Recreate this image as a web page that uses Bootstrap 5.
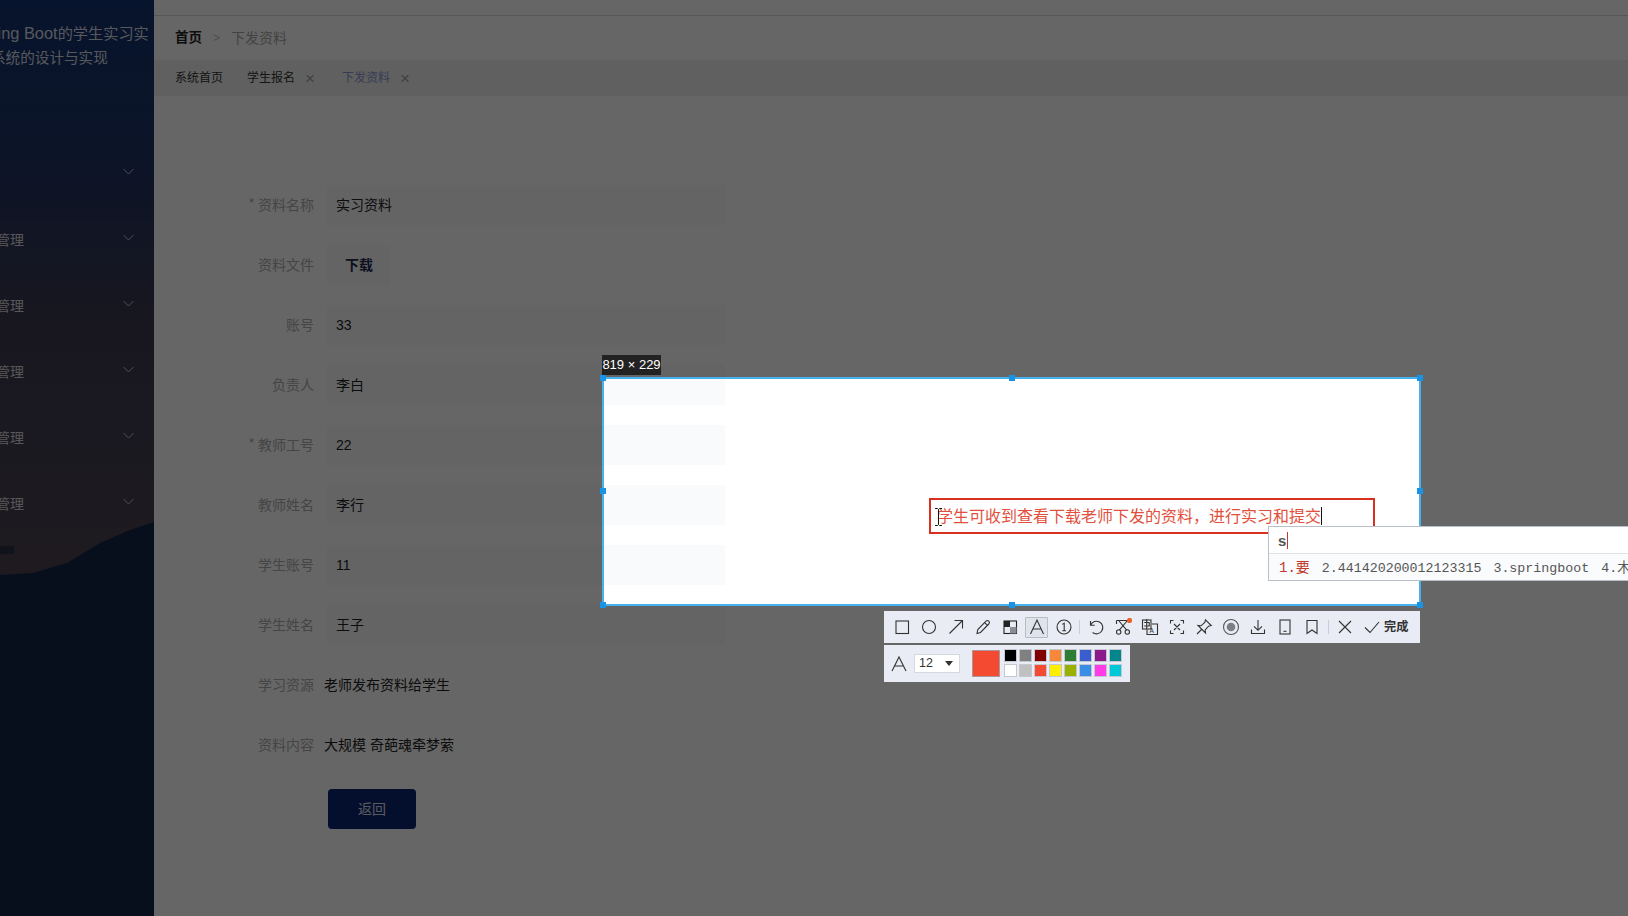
<!DOCTYPE html>
<html lang="zh-CN">
<head>
<meta charset="UTF-8" />
<title>下发资料</title>
<link href="https://cdn.jsdelivr.net/npm/bootstrap@5.3.3/dist/css/bootstrap.min.css" rel="stylesheet">
<style>
html, body { height: 100%; overflow: hidden; background: #fff; }
body { font-family: "Liberation Sans", "Noto Sans CJK SC", sans-serif; font-size: 14px; color: #303133; }

/* sidebar */
.side-bar { width: 154px; flex: none; position: relative; overflow: hidden; background: linear-gradient(#123270 0, #1e3264 150px, #3c3a50 320px, #4b4350 560px); }
.side-mountain { position: absolute; left: 0; top: 500px; width: 154px; height: 416px; }
.side-inner { position: relative; }
.side-title { padding-top: 21px; height: 138px; color: #d8dce6; font-size: 15.2px; line-height: 24px; white-space: nowrap; }
.title-one { margin-left: -28px; }
.title-latin { font-size: 16.4px; }
.title-two { margin-left: -9px; font-size: 14.6px; }
.side-item { height: 66px; padding-right: 20px; color: #d8d8dc; }
.side-item span { margin-left: -4px; position: relative; top: 3px; }

/* top of the main area */
.top-strip { height: 16px; flex: none; border-bottom: 1px solid #d6d6d6; }
.crumb-bar { height: 44px; flex: none; padding-left: 21px; gap: 11px; }
.crumb-home { font-weight: 700; color: #222; font-size: 13.5px; }
.crumb-sep { color: #c4c4c4; font-size: 12px; }
.crumb-now { color: #a8a8a8; }
.tab-bar { height: 36px; flex: none; padding-left: 21px; background: #eef0ee; font-size: 12px; color: #333; }
.tab-one { margin-right: 24px; }
.tab-close { color: #a4a4a4; font-size: 17px; margin-left: 10px; margin-right: 27px; line-height: 1; }
.tab-now { color: #8e96d6; }

/* form */
.form-area { padding-top: 89px; gap: 20px; }
.form-line { height: 40px; }
.form-name { width: 160px; flex: none; text-align: right; color: #acacac; }
.form-name i { color: #c09a9a; font-style: normal; font-size: 13px; margin-right: 4px; position: relative; top: -3px; }
.form-value { margin-left: 13px; width: 398px; height: 40px; padding-left: 9px; background: #f9fafb; color: #222; }
.form-file { margin-left: 13px; width: 63px; height: 40px; padding-left: 18px; background: #f9fafb; color: #1c2b4f; font-weight: 700; }
.form-plain { margin-left: 10px; color: #222; }
.back-btn { margin-left: 174px; margin-top: 8px; width: 88px; height: 40px; background: #0c2670; border: 0; border-radius: 4px; color: #e0e0f4; font-size: 14px; }
.back-btn:hover { background: #0c2670; color: #e0e0f4; }

/* capture overlay: the selection is a window in the dim layer */
.cap-window { position: absolute; left: 604px; top: 379px; width: 815px; height: 225px; box-shadow: 0 0 0 2400px rgba(0,0,0,.6); outline: 2px solid #45b2ef; background: transparent; }
.cap-size { position: absolute; left: 602px; top: 355px; width: 59px; height: 20px; background: #222; color: #fff; font-size: 13px; line-height: 20px; text-align: center; white-space: nowrap; }
.cap-dot { position: absolute; width: 6px; height: 6px; background: #1b93e4; }
.dot-l { left: -4px; } .dot-m { left: 405px; } .dot-r { left: 813px; }
.dot-t { top: -4px; } .dot-c { top: 109px; } .dot-b { top: 223px; }

.note-box { position: absolute; left: 929px; top: 498px; width: 446px; height: 36px; border: 2px solid #d9301f; color: #e2503d; font-size: 16px; line-height: 33px; padding-left: 6px; white-space: nowrap; }
.note-caret { display: inline-block; width: 1px; height: 18px; background: #111; vertical-align: -3px; }
.note-cursor { position: absolute; left: 934px; top: 508px; width: 9px; height: 18px; }

.ime-box { position: absolute; left: 1268px; top: 526px; width: 380px; height: 55px; background: #fff; border: 1px solid #b9c0c8; }
.ime-top { height: 27px; padding-left: 9px; color: #555; font-weight: 700; font-size: 15px; line-height: 27px; border-bottom: 1px solid #dfe3e6; }
.ime-caret { display: inline-block; width: 1px; height: 17px; background: #c0392b; margin-left: 1px; vertical-align: -3px; }
.ime-list { height: 26px; padding-left: 10px; background: #fafbfc; color: #555; font-family: "Liberation Mono", "Noto Sans CJK SC", monospace; font-size: 13.3px; line-height: 28px; white-space: nowrap; }
.ime-first { color: #c0392b; margin-right: 12px; font-size: 14px; }
.ime-cand { margin-right: 12px; }

.tool-row { position: absolute; left: 884px; top: 611px; width: 536px; height: 32px; background: #e9ecf4; padding-left: 4px; }
.tool-btn { width: 27px; height: 32px; flex: none; }
.tool-btn svg { width: 18px; height: 18px; fill: none; stroke: #333; stroke-width: 1.1; }
.tool-on { width: 23px; height: 21px; margin: 0 2px; background: #dfe3ec; border: 1px solid #b8bcc6; border-radius: 1px; }
.tool-bar-sep { width: 1px; height: 14px; background: #c8ccd4; flex: none; margin: 0 2px; }
.tool-bar-wide { margin: 0 2px 0 3px; }
.tool-done { font-size: 12.2px; font-weight: 700; color: #333; margin-left: -1px; white-space: nowrap; }

.style-row { position: absolute; left: 884px; top: 645px; width: 246px; height: 37px; background: #e9ecf4; padding-left: 6px; }
.style-row > svg { width: 18px; height: 18px; fill: none; stroke: #333; stroke-width: 1.1; flex: none; }
.size-pick { width: 46px; height: 19px; margin-left: 6px; padding: 0 4px; background: #fff; border: 1px solid #d5d8e0; font-size: 12.5px; color: #333; line-height: 1; }
.size-arrow { width: 0; height: 0; border-left: 4px solid transparent; border-right: 4px solid transparent; border-top: 5px solid #333; margin-right: 2px; }
.color-now { width: 28px; height: 27px; margin-left: 12px; background: #f44a32; border: 1px solid #a89a9a; flex: none; }
.color-grid { display: grid; grid-template-columns: repeat(8, 13px); grid-auto-rows: 13px; gap: 2px; margin-left: 4px; margin-top: -2px; }
.color-grid div { border: 1px solid #c4c8d0; }
</style>
</head>
<body>
<div class="d-flex vh-100">
    <aside class="side-bar">
        <svg class="side-mountain" viewBox="0 0 154 416" preserveAspectRatio="none">
            <path d="M0 75 L33 73 L67 63 L100 43 L130 30 L154 22 V416 H0 Z" fill="#122346" />
            <path d="M0 46 H14 V54 H0 Z" fill="#2c3044" />
        </svg>
        <div class="side-inner">
            <div class="side-title">
                <div class="title-one"><span class="title-latin">Spring Boot</span>的学生实习实</div>
                <div class="title-two">系统的设计与实现</div>
            </div>
            <div class="side-item d-flex align-items-center justify-content-end"><svg width="11" height="7" viewBox="0 0 11 7" fill="none" stroke="#c4c4c8"><path d="M.5 1 5.5 6 10.5 1" /></svg></div>
            <div class="side-item d-flex align-items-center justify-content-between"><span>管理</span><svg width="11" height="7" viewBox="0 0 11 7" fill="none" stroke="#c4c4c8"><path d="M.5 1 5.5 6 10.5 1" /></svg></div>
            <div class="side-item d-flex align-items-center justify-content-between"><span>管理</span><svg width="11" height="7" viewBox="0 0 11 7" fill="none" stroke="#c4c4c8"><path d="M.5 1 5.5 6 10.5 1" /></svg></div>
            <div class="side-item d-flex align-items-center justify-content-between"><span>管理</span><svg width="11" height="7" viewBox="0 0 11 7" fill="none" stroke="#c4c4c8"><path d="M.5 1 5.5 6 10.5 1" /></svg></div>
            <div class="side-item d-flex align-items-center justify-content-between"><span>管理</span><svg width="11" height="7" viewBox="0 0 11 7" fill="none" stroke="#c4c4c8"><path d="M.5 1 5.5 6 10.5 1" /></svg></div>
            <div class="side-item d-flex align-items-center justify-content-between"><span>管理</span><svg width="11" height="7" viewBox="0 0 11 7" fill="none" stroke="#c4c4c8"><path d="M.5 1 5.5 6 10.5 1" /></svg></div>
        </div>
    </aside>

    <main class="flex-grow-1 d-flex flex-column">
        <div class="top-strip"></div>
        <div class="crumb-bar d-flex align-items-center">
            <span class="crumb-home">首页</span><span class="crumb-sep">&gt;</span><span class="crumb-now">下发资料</span>
        </div>
        <div class="tab-bar d-flex align-items-center">
            <span class="tab-one">系统首页</span>
            <span>学生报名</span><span class="tab-close">×</span>
            <span class="tab-now">下发资料</span><span class="tab-close">×</span>
        </div>

        <form class="form-area d-flex flex-column">
            <div class="form-line d-flex align-items-center"><div class="form-name"><i>*</i>资料名称</div><div class="form-value d-flex align-items-center">实习资料</div></div>
            <div class="form-line d-flex align-items-center"><div class="form-name">资料文件</div><div class="form-file d-flex align-items-center">下载</div></div>
            <div class="form-line d-flex align-items-center"><div class="form-name">账号</div><div class="form-value d-flex align-items-center">33</div></div>
            <div class="form-line d-flex align-items-center"><div class="form-name">负责人</div><div class="form-value d-flex align-items-center">李白</div></div>
            <div class="form-line d-flex align-items-center"><div class="form-name"><i>*</i>教师工号</div><div class="form-value d-flex align-items-center">22</div></div>
            <div class="form-line d-flex align-items-center"><div class="form-name">教师姓名</div><div class="form-value d-flex align-items-center">李行</div></div>
            <div class="form-line d-flex align-items-center"><div class="form-name">学生账号</div><div class="form-value d-flex align-items-center">11</div></div>
            <div class="form-line d-flex align-items-center"><div class="form-name">学生姓名</div><div class="form-value d-flex align-items-center">王子</div></div>
            <div class="form-line d-flex align-items-center"><div class="form-name">学习资源</div><div class="form-plain">老师发布资料给学生</div></div>
            <div class="form-line d-flex align-items-center"><div class="form-name">资料内容</div><div class="form-plain">大规模 奇葩魂牵梦萦</div></div>
            <div class="form-line d-flex align-items-center"><button type="button" class="btn back-btn">返回</button></div>
        </form>
    </main>
</div>

<!-- capture tool layer -->
<div class="cap-window">
    <div class="cap-dot dot-l dot-t"></div><div class="cap-dot dot-m dot-t"></div><div class="cap-dot dot-r dot-t"></div>
    <div class="cap-dot dot-l dot-c"></div><div class="cap-dot dot-r dot-c"></div>
    <div class="cap-dot dot-l dot-b"></div><div class="cap-dot dot-m dot-b"></div><div class="cap-dot dot-r dot-b"></div>
</div>
<div class="cap-size">819 × 229</div>

<div class="note-box">学生可收到查看下载老师下发的资料，进行实习和提交<span class="note-caret"></span></div>
<svg class="note-cursor" viewBox="0 0 9 18" fill="none" stroke="#111" stroke-width="1"><path d="M1 .5H3.5L4.5 1.5 5.5 .5H8M4.5 1.5V16.5M1 17.5H3.5L4.5 16.5 5.5 17.5H8" /></svg>

<div class="ime-box">
    <div class="ime-top">s<span class="ime-caret"></span></div>
    <div class="ime-list"><span class="ime-first">1.要</span><span class="ime-cand">2.441420200012123315</span><span class="ime-cand">3.springboot</span><span>4.木</span></div>
</div>

<div class="tool-row d-flex align-items-center">
    <div class="tool-btn d-flex align-items-center justify-content-center"><svg viewBox="0 0 18 18"><rect x="3" y="3" width="12.5" height="12.5" /></svg></div>
    <div class="tool-btn d-flex align-items-center justify-content-center"><svg viewBox="0 0 18 18"><circle cx="9" cy="9" r="6.5" /></svg></div>
    <div class="tool-btn d-flex align-items-center justify-content-center"><svg viewBox="0 0 18 18"><path d="M2.5 15.5 15.5 2.5M7.5 2.5H15.5V10.5" /></svg></div>
    <div class="tool-btn d-flex align-items-center justify-content-center"><svg viewBox="0 0 18 18"><path d="M3 15.5 3.8 11.5 12 3.2A1.7 1.7 0 0 1 14.8 6L6.5 14.5ZM10.7 4.6 13.4 7.3" /></svg></div>
    <div class="tool-btn d-flex align-items-center justify-content-center"><svg viewBox="0 0 18 18"><rect x="3" y="3" width="12.5" height="12.5" stroke="#222" /><rect x="3" y="3" width="6" height="6" fill="#222" stroke="none" /><rect x="9" y="9" width="6.5" height="6.5" fill="#8a8d96" stroke="none" /></svg></div>
    <div class="tool-btn tool-on d-flex align-items-center justify-content-center"><svg viewBox="0 0 18 18"><path d="M2.5 16 9 2 15.5 16M4.8 11H13.2" /></svg></div>
    <div class="tool-btn d-flex align-items-center justify-content-center"><svg viewBox="0 0 18 18"><circle cx="9" cy="9" r="7" /><path d="M7.3 6.4 9.2 5.2V12.8M7.3 12.8H11" /></svg></div>
    <div class="tool-bar-sep"></div>
    <div class="tool-btn d-flex align-items-center justify-content-center"><svg viewBox="0 0 18 18"><path d="M3.5 3V7.2H7.7M3.7 7A6.3 6.3 0 1 1 5.6 14.5" /></svg></div>
    <div class="tool-btn d-flex align-items-center justify-content-center"><svg viewBox="0 0 18 18"><path d="M2.5 2.5V6M2.5 2.5H15.5M5 3 12.7 12.2M13 3 5.3 12.2" /><circle cx="4.7" cy="14" r="2.2" /><circle cx="13.3" cy="14" r="2.2" /><circle cx="15.5" cy="2.5" r="2.6" fill="#e8632c" stroke="none" /></svg></div>
    <div class="tool-btn d-flex align-items-center justify-content-center"><svg viewBox="0 0 18 18"><rect x="1.5" y="2" width="8.5" height="9" /><path d="M5.7 1V11.5M3.2 4.5H8.2V8H3.2" /><path d="M11 6H16.5V16.5H6V12" /><text x="8.6" y="15" font-size="6.5" fill="#333" stroke="none" font-family="Liberation Sans">A</text></svg></div>
    <div class="tool-btn d-flex align-items-center justify-content-center"><svg viewBox="0 0 18 18"><path d="M5.5 2.5H2.5V5.5M12.5 2.5H15.5V5.5M2.5 12.5V15.5H5.5M15.5 12.5V15.5H12.5M6 6 12 12M12 6 6 12" /></svg></div>
    <div class="tool-btn d-flex align-items-center justify-content-center"><svg viewBox="0 0 18 18"><path d="M10.5 1.8 16.2 7.5 13.5 8.2 10.2 12 10.5 15 3 7.5 6 7.8 9.8 4.5ZM6.5 11.5 2 16" /></svg></div>
    <div class="tool-btn d-flex align-items-center justify-content-center"><svg viewBox="0 0 18 18"><circle cx="9" cy="9" r="7.5" stroke="#555" /><circle cx="9" cy="9" r="4.3" fill="#7c7f88" stroke="none" /></svg></div>
    <div class="tool-btn d-flex align-items-center justify-content-center"><svg viewBox="0 0 18 18"><path d="M9 2V12M5 8.3 9 12.3 13 8.3M2.5 11.5V15.5H15.5V11.5" /></svg></div>
    <div class="tool-btn d-flex align-items-center justify-content-center"><svg viewBox="0 0 18 18"><rect x="4" y="2" width="10" height="14" /><path d="M7.5 13.3H10.5" /></svg></div>
    <div class="tool-btn d-flex align-items-center justify-content-center"><svg viewBox="0 0 18 18"><path d="M4 2.5H14V15.5L9 12 4 15.5Z" /></svg></div>
    <div class="tool-bar-sep tool-bar-wide"></div>
    <div class="tool-btn d-flex align-items-center justify-content-center"><svg viewBox="0 0 18 18"><path d="M3 3 15 15M15 3 3 15" /></svg></div>
    <div class="tool-btn d-flex align-items-center justify-content-center"><svg viewBox="0 0 18 18"><path d="M2 9.5 7 14.5 16 4" /></svg></div>
    <span class="tool-done">完成</span>
</div>

<div class="style-row d-flex align-items-center">
    <svg viewBox="0 0 18 18"><path d="M2 16 9 2 16 16M4.5 11H13.5" /></svg>
    <div class="size-pick d-flex align-items-center justify-content-between"><span>12</span><span class="size-arrow"></span></div>
    <div class="color-now"></div>
    <div class="color-grid" id="colorGrid"></div>
</div>

<script src="https://cdn.jsdelivr.net/npm/bootstrap@5.3.3/dist/js/bootstrap.bundle.min.js"></script>
<script>
    const colors = ['#000000', '#808080', '#800000', '#f7883a', '#2e7d32', '#3a5fcd', '#8b1a8b', '#00868b',
                    '#ffffff', '#c0c0c0', '#f44a32', '#ffee00', '#9ab000', '#3a8ee6', '#ff3ce6', '#00c8d8'];
    const grid = document.getElementById('colorGrid');
    colors.forEach((c) => {
        const cell = document.createElement('div');
        cell.style.backgroundColor = c;
        grid.appendChild(cell);
    });
</script>
</body>
</html>
